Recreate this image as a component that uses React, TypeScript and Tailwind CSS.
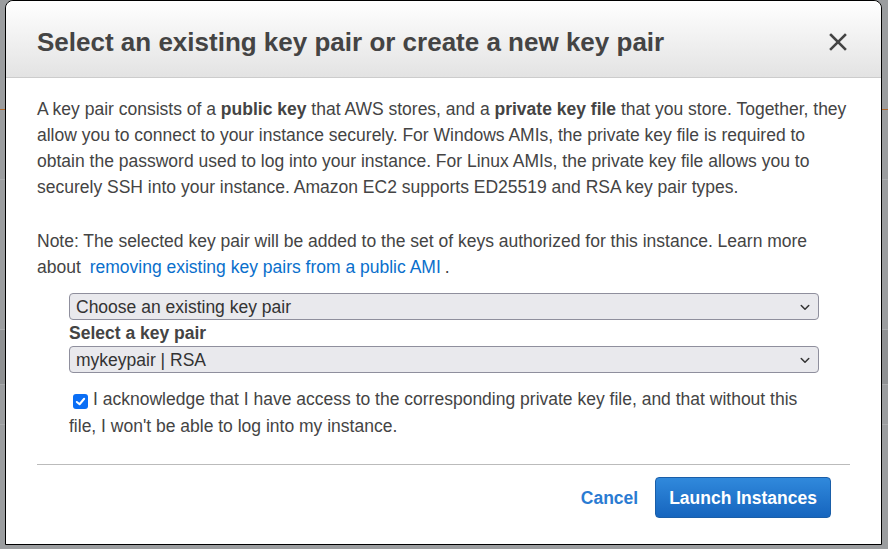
import React from "react";

function Chevron() {
  return (
    <svg width="12" height="12" viewBox="0 0 16 16" fill="none" stroke="#333" strokeWidth="2" strokeLinecap="round" strokeLinejoin="round">
      <polyline points="3 6 8 11 13 6" />
    </svg>
  );
}

export default function App() {
  return (
    <div className="relative w-[888px] h-[549px] overflow-hidden bg-[#9b9d9f] font-['Liberation_Sans',Arial,sans-serif]">
      {/* Dimmed page behind the modal */}
      <div className="flex flex-col w-full h-full">
        <div className="h-[110px] border-b border-[#b0672a]" />
        <div className="h-[70px] border-b border-[#a9abad]" />
        <div className="h-[150px] border-b border-[#a9abad]" />
        <div className="h-[55px] bg-[#8f9193] border-b border-[#a9abad]" />
        <div className="h-[40px] border-b border-[#a9abad]" />
      </div>

      {/* Modal */}
      <div className="absolute left-[5px] top-0 w-[877px] h-[545px] bg-white border border-black rounded-t-[8px] flex flex-col">
        <div className="h-[77px] shrink-0 rounded-t-[8px] bg-gradient-to-b from-white to-[#e3e3e3] border-b border-[#cccccc] flex items-center justify-between pt-[6px] pl-[31px] pr-[34px]">
          <h1 className="text-[26px] font-bold text-[#444444]">
            Select an existing key pair or create a new key pair
          </h1>
          <svg width="18" height="18" viewBox="0 0 18 18" stroke="#444" strokeWidth="2.6" strokeLinecap="square">
            <line x1="2" y1="2" x2="16" y2="16" />
            <line x1="16" y1="2" x2="2" y2="16" />
          </svg>
        </div>

        <div className="px-[31px] pt-[18px] text-[17.5px] leading-[26px] text-[#444444]">
          <p>
            A key pair consists of a <b>public key</b> that AWS stores, and a <b>private key file</b> that you store. Together, they allow you to connect to your instance securely. For Windows AMIs, the private key file is required to obtain the password used to log into your instance. For Linux AMIs, the private key file allows you to securely SSH into your instance. Amazon EC2 supports ED25519 and RSA key pair types.
          </p>
          <p className="mt-[28px]">
            Note: The selected key pair will be added to the set of keys authorized for this instance. Learn more
            <br />
            about <a className="text-[#0a6fcc] mx-[4px]">removing existing key pairs from a public AMI</a>.
          </p>

          <div className="pl-[32px] pr-[32px] mt-[13px]">
            <div className="w-[750px] h-[27px] rounded-[4px] border border-[#8f8f9d] bg-[#e9e9ed] flex items-center justify-between pl-[6px] pr-[7px] text-[17.5px] text-[#333]">
              <span>Choose an existing key pair</span>
              <Chevron />
            </div>
            <div className="font-bold text-[#444] text-[17.5px] leading-[26px]">Select a key pair</div>
            <div className="w-[750px] h-[27px] rounded-[4px] border border-[#8f8f9d] bg-[#e9e9ed] flex items-center justify-between pl-[6px] pr-[7px] text-[17.5px] text-[#333]">
              <span>mykeypair | RSA</span>
              <Chevron />
            </div>
            <p className="mt-[13px] text-[17.5px] leading-[27px] pr-[20px]">
              <span className="inline-flex align-[-2px] ml-[4px] mr-[5px] w-[15px] h-[15px] rounded-[3px] bg-[#0a6ef5] items-center justify-center">
                <svg width="11" height="11" viewBox="0 0 12 12" fill="none" stroke="white" strokeWidth="2.2" strokeLinecap="round" strokeLinejoin="round">
                  <polyline points="2 6.5 5 9 10 3" />
                </svg>
              </span>
              I acknowledge that I have access to the corresponding private key file, and that without this file, I won't be able to log into my instance.
            </p>
          </div>

          <div className="mt-[24px] border-t border-[#bbbbbb]" />

          <div className="flex items-center justify-end gap-[17px] pt-[12px] pr-[19px]">
            <span className="text-[#2a7bd2] font-bold text-[17.5px]">Cancel</span>
            <button className="h-[41px] px-[13px] rounded-[4px] border border-[#1a5ea8] bg-gradient-to-b from-[#3089dc] to-[#1665be] text-white font-bold text-[17.5px]">
              Launch Instances
            </button>
          </div>
        </div>
      </div>
    </div>
  );
}
